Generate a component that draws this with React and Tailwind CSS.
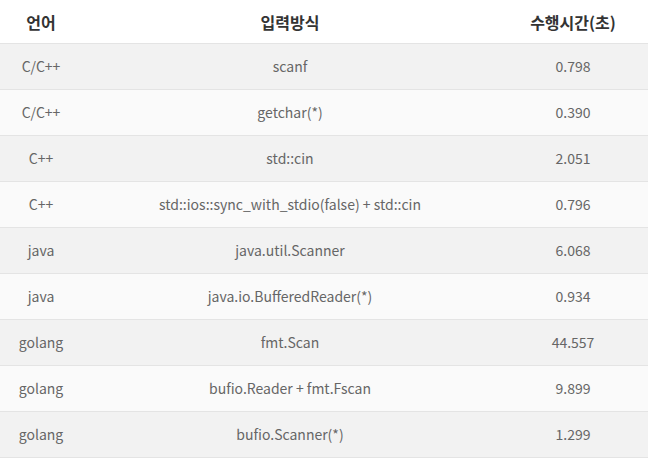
import React from 'react';

const rows = [
  ['C/C++', 'scanf', '0.798'],
  ['C/C++', 'getchar(*)', '0.390'],
  ['C++', 'std::cin', '2.051'],
  ['C++', 'std::ios::sync_with_stdio(false) + std::cin', '0.796'],
  ['java', 'java.util.Scanner', '6.068'],
  ['java', 'java.io.BufferedReader(*)', '0.934'],
  ['golang', 'fmt.Scan', '44.557'],
  ['golang', 'bufio.Reader + fmt.Fscan', '9.899'],
  ['golang', 'bufio.Scanner(*)', '1.299'],
];

const App = () => {
  return (
    <div
      className="w-[648px] h-[458px] bg-white overflow-hidden"
      style={{ fontFamily: '"Noto Sans CJK KR", "Liberation Sans", sans-serif' }}
    >
      <div className="grid grid-cols-[82px_416px_150px] h-[44px] items-center border-b border-[#e4e4e4] text-[16px] font-bold text-[#333]">
        <div className="text-center">언어</div>
        <div className="text-center">입력방식</div>
        <div className="text-center">수행시간(초)</div>
      </div>
      {rows.map((row, i) => (
        <div
          key={i}
          className={
            'grid grid-cols-[82px_416px_150px] h-[46px] items-center border-b border-[#e4e4e4] text-[14px] text-[#666] ' +
            (i % 2 === 0 ? 'bg-[#f2f2f2]' : 'bg-[#fafafa]')
          }
        >
          <div className="text-center">{row[0]}</div>
          <div className="text-center">{row[1]}</div>
          <div className="text-center">{row[2]}</div>
        </div>
      ))}
    </div>
  );
};

export default App;
